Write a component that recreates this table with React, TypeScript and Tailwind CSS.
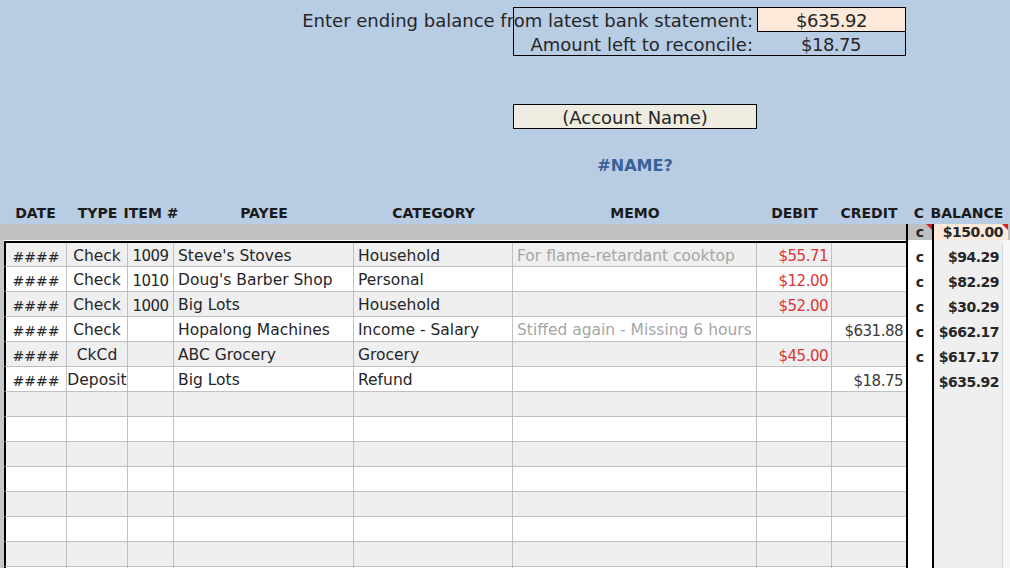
const COLS =
  "grid grid-cols-[4px_63px_61px_46px_180px_159px_244px_75px_74px_26px_70px_1fr]";

type Entry = {
  type: string;
  item: string;
  payee: string;
  category: string;
  memo: string;
  debit: string;
  credit: string;
  cleared: boolean;
  balance: string;
};

const entries: Entry[] = [
  { type: "Check", item: "1009", payee: "Steve's Stoves", category: "Household", memo: "For flame-retardant cooktop", debit: "$55.71", credit: "", cleared: true, balance: "$94.29" },
  { type: "Check", item: "1010", payee: "Doug's Barber Shop", category: "Personal", memo: "", debit: "$12.00", credit: "", cleared: true, balance: "$82.29" },
  { type: "Check", item: "1000", payee: "Big Lots", category: "Household", memo: "", debit: "$52.00", credit: "", cleared: true, balance: "$30.29" },
  { type: "Check", item: "", payee: "Hopalong Machines", category: "Income - Salary", memo: "Stiffed again - Missing 6 hours", debit: "", credit: "$631.88", cleared: true, balance: "$662.17" },
  { type: "CkCd", item: "", payee: "ABC Grocery", category: "Grocery", memo: "", debit: "$45.00", credit: "", cleared: true, balance: "$617.17" },
  { type: "Deposit", item: "", payee: "Big Lots", category: "Refund", memo: "", debit: "", credit: "$18.75", cleared: false, balance: "$635.92" },
];

const headers = ["DATE", "TYPE", "ITEM #", "PAYEE", "CATEGORY", "MEMO", "DEBIT", "CREDIT", "C", "BALANCE"];

const Corner = () => (
  <span className="absolute top-0 right-0 w-0 h-0 border-t-[6px] border-t-[#d92020] border-l-[6px] border-l-transparent" />
);

const Row = ({ entry, index }: { entry?: Entry; index: number }) => {
  const shade = index % 2 === 0 ? "bg-[#efefef]" : "bg-white";
  const height = index === 0 ? "h-[24px]" : "h-[25px]";
  const cell = `flex items-center pt-[4px] border-r border-b border-[#c0c0c0] overflow-hidden whitespace-nowrap ${shade}`;

  return (
    <div className={`${COLS} ${height}`}>
      <div className="bg-[#c8c8c8]" />
      <div className={`${cell} justify-center border-l-2 border-l-black text-[14px]`}>
        {entry ? "####" : ""}
      </div>
      <div className={`${cell} justify-center`}>{entry?.type}</div>
      <div className={`${cell} justify-center text-[15px] tracking-[-0.5px]`}>{entry?.item}</div>
      <div className={`${cell} pl-1`}>{entry?.payee}</div>
      <div className={`${cell} pl-1`}>{entry?.category}</div>
      <div className={`${cell} pl-1 text-[#a6a6a6]`}>{entry?.memo}</div>
      <div className={`${cell} justify-end pr-[3px] text-[15px] tracking-[-0.5px] text-[#dc3535]`}>
        {entry?.debit}
      </div>
      <div
        className={`flex items-center justify-end pt-[4px] border-b border-[#c0c0c0] pr-[3px] text-[15px] tracking-[-0.5px] text-[#3a3a3a] ${shade}`}
      >
        {entry?.credit}
      </div>
      <div className="flex items-center justify-center pt-[4px] border-l-2 border-black bg-white text-[14px] font-bold">
        {entry?.cleared ? "c" : ""}
      </div>
      <div className="flex items-center justify-end pt-[4px] border-l-2 border-black bg-[#efefef] pr-[3px] text-[14px] font-bold tracking-[-0.5px]">
        {entry?.balance}
      </div>
      <div className="border-l border-[#d6d6d6] bg-[#f7f7f7]" />
    </div>
  );
};

export default function App() {
  const blank = Array.from({ length: 8 });

  return (
    <div className="w-[1010px] h-[568px] overflow-hidden bg-white text-[15.5px] leading-none text-[#262626] font-['DejaVu_Sans',sans-serif]">
      {/* summary header */}
      <div className="h-[224px] bg-[#b8cce4] flex flex-col pt-[7px]">
        <div className={COLS}>
          <div className="col-start-7 col-span-3 border border-black grid grid-cols-[243px_1fr] text-[18px]">
            <div className="h-[24px] flex items-center justify-end pt-[2px] pr-1 whitespace-nowrap">
              Enter ending balance from latest bank statement:
            </div>
            <div className="h-[24px] flex items-center justify-center pt-[2px] border-l border-b border-black bg-[#fde9d9] tracking-[-0.5px]">
              $635.92
            </div>
            <div className="h-[23px] flex items-center justify-end pt-[2px] pr-1 whitespace-nowrap">
              Amount left to reconcile:
            </div>
            <div className="h-[23px] flex items-center justify-center pt-[2px] tracking-[-0.5px]">$18.75</div>
          </div>
        </div>

        <div className={`${COLS} mt-[48px]`}>
          <div className="col-start-7 h-[25px] flex items-center justify-center pt-[2px] border border-black bg-[#eeece1] text-[18px]">
            (Account Name)
          </div>
        </div>

        <div className={`${COLS} mt-[25px]`}>
          <div className="col-start-7 h-[24px] flex items-center justify-center text-[16px] font-bold text-[#3a6196]">
            #NAME?
          </div>
        </div>

        <div className={`${COLS} mt-auto h-[22px] text-[14px] font-bold text-[#1a1a1a]`}>
          <div />
          {headers.map((h) => (
            <div key={h} className="flex items-center justify-center whitespace-nowrap">
              {h}
            </div>
          ))}
        </div>
      </div>

      {/* opening balance band */}
      <div className={`${COLS} h-[16px] bg-[#c0c0c0]`}>
        <div className="col-span-9" />
        <div className="relative flex items-center justify-center border-l-2 border-black text-[14px] font-bold">
          c
          <Corner />
        </div>
        <div className="relative col-span-2 mr-[2px] flex items-center justify-end border-l-2 border-black bg-[#fde9d9] pr-[5px] text-[14px] font-bold tracking-[-0.5px]">
          $150.00
          <Corner />
        </div>
      </div>

      <div className={`${COLS} h-px`}>
        <div className="bg-[#c8c8c8]" />
        <div className="col-span-8 bg-white" />
        <div className="border-l-2 border-black bg-white" />
        <div className="border-l-2 border-black bg-[#efefef]" />
        <div className="bg-[#f7f7f7]" />
      </div>
      <div className={`${COLS} h-[2px]`}>
        <div className="bg-[#c8c8c8]" />
        <div className="col-span-8 bg-black" />
        <div className="border-l-2 border-black bg-white" />
        <div className="border-l-2 border-black bg-[#efefef]" />
        <div className="bg-[#f7f7f7]" />
      </div>

      {entries.map((e, i) => (
        <Row key={i} entry={e} index={i} />
      ))}
      {blank.map((_, i) => (
        <Row key={`b${i}`} index={entries.length + i} />
      ))}
    </div>
  );
}
